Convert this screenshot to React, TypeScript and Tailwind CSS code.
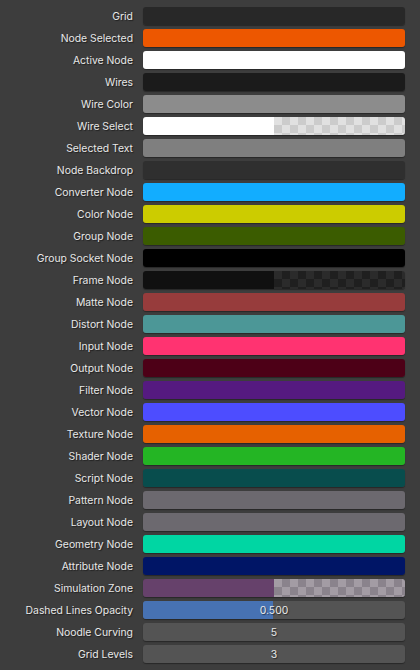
import React from 'react';

// Theme rows for the node editor colour panel
interface ColorRow {
  label: string;
  color: string;
  alpha?: 'light' | 'dark' | 'zone';
}

const rows: ColorRow[] = [
  { label: 'Grid', color: '#282828' },
  { label: 'Node Selected', color: '#ed5700' },
  { label: 'Active Node', color: '#ffffff' },
  { label: 'Wires', color: '#1b1b1b' },
  { label: 'Wire Color', color: '#8c8c8c' },
  { label: 'Wire Select', color: '#ffffff', alpha: 'light' },
  { label: 'Selected Text', color: '#7f7f7f' },
  { label: 'Node Backdrop', color: '#2f2f2f' },
  { label: 'Converter Node', color: '#12adff' },
  { label: 'Color Node', color: '#cccc00' },
  { label: 'Group Node', color: '#3b5c00' },
  { label: 'Group Socket Node', color: '#000000' },
  { label: 'Frame Node', color: '#101010', alpha: 'dark' },
  { label: 'Matte Node', color: '#973c3c' },
  { label: 'Distort Node', color: '#4c9797' },
  { label: 'Input Node', color: '#ff3371' },
  { label: 'Output Node', color: '#4d0017' },
  { label: 'Filter Node', color: '#551a80' },
  { label: 'Vector Node', color: '#4d4dff' },
  { label: 'Texture Node', color: '#e66100' },
  { label: 'Shader Node', color: '#24b524' },
  { label: 'Script Node', color: '#084d4d' },
  { label: 'Pattern Node', color: '#6c696f' },
  { label: 'Layout Node', color: '#6c696f' },
  { label: 'Geometry Node', color: '#00d6a3' },
  { label: 'Attribute Node', color: '#001566' },
  { label: 'Simulation Zone', color: '#66416b', alpha: 'zone' },
];

const checker: Record<string, string> = {
  light:
    'bg-[repeating-conic-gradient(#cccccc_0_25%,#e1e1e1_0_50%)] bg-[length:16px_16px]',
  dark: 'bg-[repeating-conic-gradient(#1f1f1f_0_25%,#2b2b2b_0_50%)] bg-[length:16px_16px]',
  zone: 'bg-[repeating-conic-gradient(#8a838c_0_25%,#a39ca4_0_50%)] bg-[length:16px_16px]',
};

const Label: React.FC<{ text: string }> = ({ text }) => (
  <div className="w-[133px] shrink-0 translate-y-[1px] text-right text-[10.4px] leading-none text-[#e8e8e8] [text-shadow:1px_1px_1px_rgba(0,0,0,0.5)]">
    {text}
  </div>
);

const App: React.FC = () => {
  return (
    <div
      className="w-[420px] h-[670px] bg-[#3d3d3d] pt-[7px] flex flex-col gap-[4px]"
      style={{ fontFamily: 'Inter, "DejaVu Sans", sans-serif' }}
    >
      {rows.map((row) => (
        <div key={row.label} className="flex items-center gap-[10px] h-[18px]">
          <Label text={row.label} />
          <div className="w-[262px] h-[18px] rounded-[3px] overflow-hidden flex shadow-[0_1px_1px_rgba(0,0,0,0.35)]">
            {row.alpha ? (
              <>
                <div className="w-[131px] h-full" style={{ backgroundColor: row.color }} />
                <div className={`flex-1 h-full ${checker[row.alpha]}`} />
              </>
            ) : (
              <div className="flex-1 h-full" style={{ backgroundColor: row.color }} />
            )}
          </div>
        </div>
      ))}

      <div className="flex items-center gap-[10px] h-[18px]">
        <Label text="Dashed Lines Opacity" />
        <div className="relative w-[262px] h-[18px] rounded-[3px] overflow-hidden bg-[#545454] shadow-[0_1px_1px_rgba(0,0,0,0.35)]">
          <div className="absolute left-0 top-0 h-full w-[130px] bg-[#4772b3]" />
          <div className="relative h-full pt-[1px] flex items-center justify-center text-[10.4px] text-[#e8e8e8] [text-shadow:1px_1px_1px_rgba(0,0,0,0.5)]">
            0.500
          </div>
        </div>
      </div>

      {[
        ['Noodle Curving', '5'],
        ['Grid Levels', '3'],
      ].map(([label, value]) => (
        <div key={label} className="flex items-center gap-[10px] h-[18px]">
          <Label text={label} />
          <div className="w-[262px] h-[18px] pt-[1px] rounded-[3px] bg-[#545454] flex items-center justify-center text-[10.4px] text-[#e8e8e8] shadow-[0_1px_1px_rgba(0,0,0,0.35)] [text-shadow:1px_1px_1px_rgba(0,0,0,0.5)]">
            {value}
          </div>
        </div>
      ))}
    </div>
  );
};

export default App;
